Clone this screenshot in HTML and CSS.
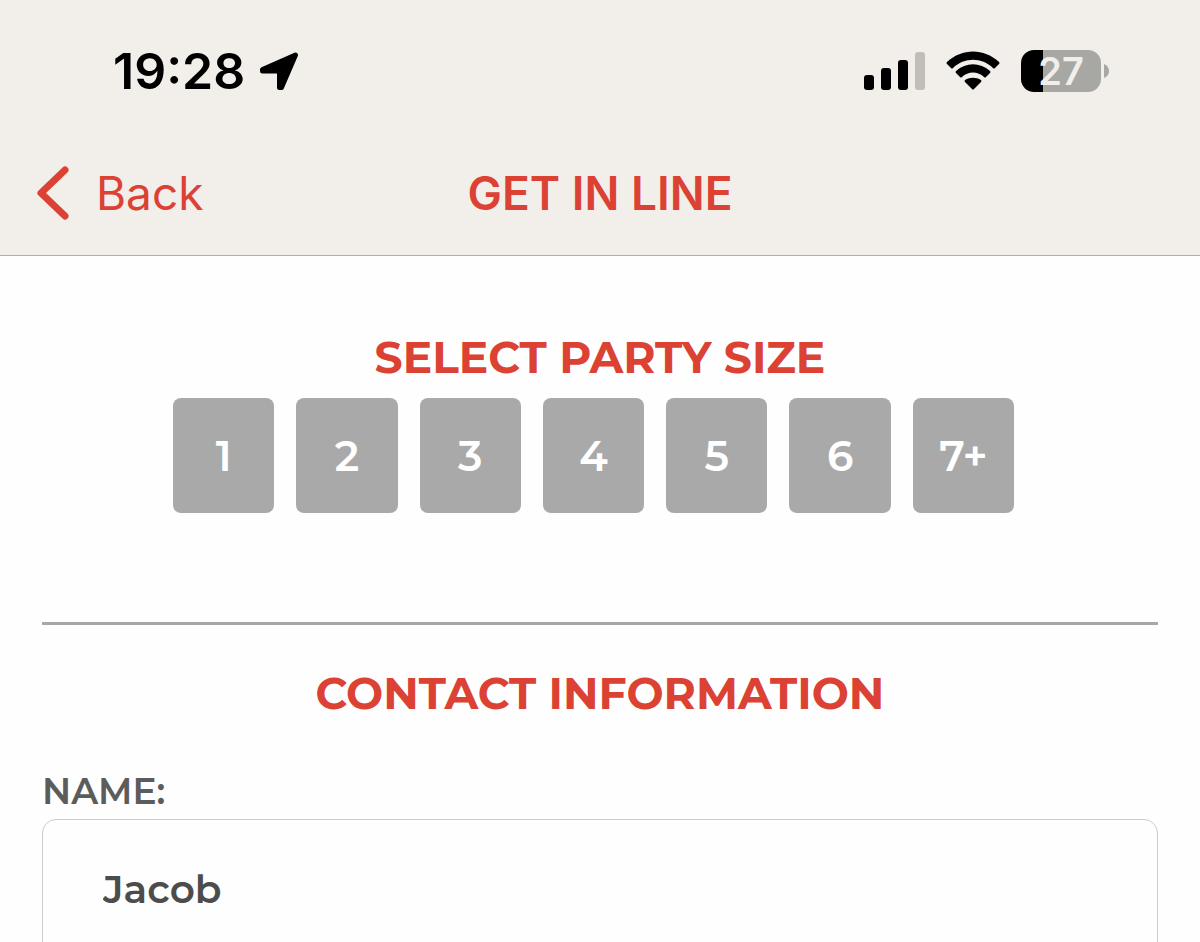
FILE: index.html
```html
<!DOCTYPE html>
<html lang="en">

<head>
    <meta charset="UTF-8">
    <meta name="viewport" content="width=device-width, initial-scale=1.0">
    <title>Get In Line</title>
    <link rel="stylesheet" href="styles.css">
</head>

<body>
    <header class="header">
        <!-- Status bar -->
        <div class="status-bar">
            <div class="status-left">
                <span class="clock">19:28</span>
                <svg class="location-icon" width="40" height="40" viewBox="0 0 40 40" aria-hidden="true">
                    <path d="M3.500 18.500 L36.500 4 L22.500 36.500 L20.500 36.500 L20.500 20 L3.500 20 Z" stroke="#000" stroke-width="5" stroke-linejoin="round" />
                </svg>
            </div>
            <div class="status-right">
                <svg width="62" height="40" viewBox="0 0 62 40" aria-hidden="true">
                    <rect x="1" y="24" width="10" height="15" rx="3" />
                    <rect x="18" y="17" width="10" height="22" rx="3" />
                    <rect x="35" y="9" width="10" height="30" rx="3" />
                    <rect x="52" y="1" width="10" height="38" rx="3" fill="#c1beb9" />
                </svg>
                <svg width="54" height="40" viewBox="0 0 54 40" aria-hidden="true">
                    <path d="M1 13 Q0 12 1 11 C16 -3 38 -3 53 11 Q54 12 53 13 L49 17 Q48 18 47 17 C36 6 18 6 7 17 Q6 18 5 17 Z" />
                    <path d="M10 22 Q9 21 10 20 C20 11 34 11 44 20 Q45 21 44 22 L40 26 Q39 27 38 26 C32 20 22 20 16 26 Q15 27 14 26 Z" />
                    <path d="M19 31 Q18 30 19 29 C24 26 30 26 35 29 Q36 30 35 31 L28 38 Q27 39 26 38 Z" />
                </svg>
                <div class="battery">
                    <span class="battery-level">27</span>
                    <svg width="5" height="14" viewBox="0 0 5 14" aria-hidden="true">
                        <path d="M0 0 Q5 2 5 7 Q5 12 0 14 Z" fill="#a7a7a3" />
                    </svg>
                </div>
            </div>
        </div>

        <!-- Navigation -->
        <nav class="nav-bar">
            <a href="#" class="back-link">
                <svg width="34" height="56" viewBox="0 0 34 56" aria-hidden="true">
                    <path d="M29 5 L5 28 L29 51" fill="none" stroke="#db4234" stroke-width="7" stroke-linecap="round" stroke-linejoin="round" />
                </svg>
                Back
            </a>
            <h1>GET IN LINE</h1>
        </nav>
    </header>

    <main class="content">
        <form id="waitlistForm">
            <!-- Party Size -->
            <section class="party-section">
                <h2>SELECT PARTY SIZE</h2>
                <div class="party-sizes">
                    <button type="button">1</button>
                    <button type="button">2</button>
                    <button type="button">3</button>
                    <button type="button">4</button>
                    <button type="button">5</button>
                    <button type="button">6</button>
                    <button type="button">7+</button>
                </div>
            </section>

            <!-- Contact Information -->
            <section class="contact-section">
                <h2>CONTACT INFORMATION</h2>
                <label for="name">NAME:</label>
                <input type="text" id="name" name="name" value="Jacob">
            </section>
        </form>
    </main>
</body>

</html>
```
FILE: styles.css
```css
* {
    box-sizing: border-box;
}

body {
    margin: 0;
    font-family: 'Montserrat', 'Inter', sans-serif;
    background-color: #fefefe;
    color: #4c4c4c;
}

svg {
    display: block;
    flex-shrink: 0;
}

.header {
    background-color: #f2eeea;
    border-bottom: 1px solid #b0aeab;
    font-family: 'Inter', sans-serif;
}

.status-bar {
    display: flex;
    justify-content: space-between;
    align-items: center;
    height: 142px;
    padding: 0 91px 0 113px;
    color: #000;
}

.status-left {
    display: flex;
    align-items: center;
    gap: 14px;
}

.clock {
    font-size: 50px;
    line-height: 60px;
    font-weight: 600;
}

.status-right {
    display: flex;
    align-items: center;
    gap: 21px;
}

.battery {
    display: flex;
    align-items: center;
    gap: 3px;
}

.battery-level {
    width: 80px;
    border-radius: 13px;
    background: linear-gradient(to right, #000 27%, #a7a7a3 27%);
    color: #f2eeea;
    font-size: 38px;
    line-height: 42px;
    font-weight: 600;
    text-align: center;
}

.nav-bar {
    display: grid;
    grid-template-columns: 1fr auto 1fr;
    align-items: center;
    padding: 21px 36px 32px;
    color: #db4234;
}

.nav-bar h1 {
    margin: 0;
    font-size: 46px;
    line-height: 60px;
    font-weight: 600;
}

.back-link {
    display: flex;
    align-items: center;
    gap: 26px;
    color: #db4234;
    font-size: 46px;
    line-height: 60px;
    text-decoration: none;
}

.content {
    padding: 0 42px;
}

.content h2 {
    margin: 0;
    color: #db4234;
    font-size: 44px;
    line-height: 60px;
    font-weight: 700;
    text-align: center;
}

.party-section {
    padding: 71px 0 109px;
    border-bottom: 3px solid #a6a6a6;
}

.party-sizes {
    display: grid;
    grid-template-columns: repeat(7, 1fr);
    gap: 22px;
    max-width: 854px;
    margin: 11px auto 0;
    padding-right: 13px;
}

.party-sizes button {
    height: 115px;
    padding: 0;
    border: none;
    border-radius: 8px;
    background-color: #a9a9a9;
    color: white;
    font-family: inherit;
    font-size: 42px;
    font-weight: 600;
    cursor: pointer;
}

.party-sizes button:hover {
    background-color: #db4234;
}

.contact-section {
    padding-top: 38px;
}

.contact-section label {
    display: block;
    margin-top: 43px;
    color: #5c5c5c;
    font-size: 36px;
    line-height: 50px;
    font-weight: 600;
}

.contact-section input {
    display: block;
    width: 100%;
    height: 140px;
    margin-top: 3px;
    padding: 0 60px;
    border: 1px solid #cccccc;
    border-radius: 14px;
    background-color: #fefefe;
    color: #4c4c4c;
    font-family: inherit;
    font-size: 39px;
    font-weight: 600;
}
```
